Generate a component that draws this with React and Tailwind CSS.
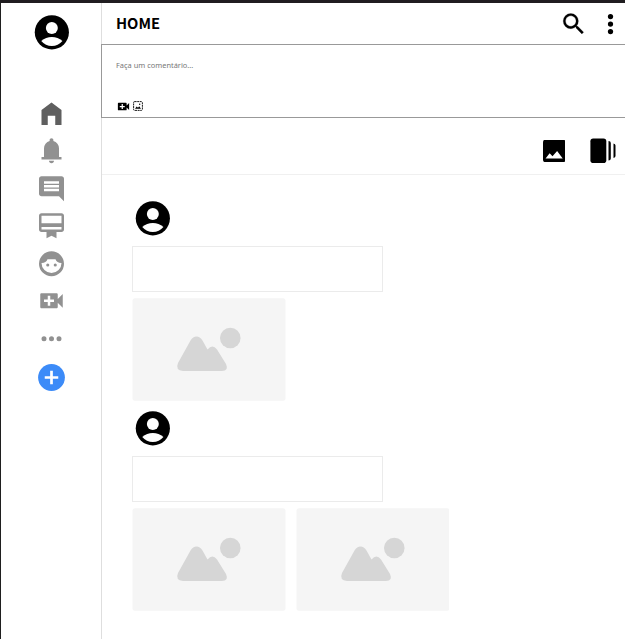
const Icon = ({ className, children, box = '0 0 24 24' }) => (
  <svg viewBox={box} fill="currentColor" className={`block shrink-0 ${className}`} aria-hidden="true">
    {children}
  </svg>
);

const Avatar = () => (
  <Icon className="h-[41px] w-[41px] text-black" box="-0.2 0.1 24 24">
    <circle cx="12" cy="12" r="10" />
    <circle cx="12" cy="9.5" r="3.5" fill="#fff" />
    <path fill="#fff" d="M5.8 17.1Q8.5 14.8 12 14.8T18.2 17.1Q15.700 20 12 20T5.800 17.100Z" />
  </Icon>
);

const videoPath =
  'M17 10.5V7c0-.55-.45-1-1-1H4c-.55 0-1 .45-1 1v10c0 .55.45 1 1 1h12c.55 0 1-.45 1-1v-3.500l4 4v-11l-4 4zM14 13h-3v3H9v-3H6v-2h3V8h2v3h3v2z';

const navIcons = [
  { name: 'home', tone: 'text-[#5f5f5f]', path: 'M4 21V9l8-6 8 6v12h-5v-7.500H9V21z' },
  {
    name: 'notifications',
    tone: 'text-[#919191]',
    path: 'M4 19v-2h2v-7q0-2.075 1.250-3.687T10.500 4.200v-.700q0-.625.438-1.062T12 2t1.063.438T13.500 3.500v.700q2 .500 3.250 2.113T18 10v7h2v2zm8 3q-.825 0-1.412-.587T10 20h4q0 .825-.587 1.413T12 22z',
  },
  {
    name: 'comments',
    tone: 'text-[#919191]',
    path: 'M22 22l-4-4H4q-.825 0-1.412-.587T2 16V4q0-.825.588-1.412T4 2h16q.825 0 1.413.588T22 4zM6 14h12v-2H6zm0-3h12V9H6zm0-3h12V6H6z',
  },
  {
    name: 'membership',
    tone: 'text-[#919191]',
    path: 'M20 2H4c-1.110 0-2 .890-2 2v11c0 1.110.890 2 2 2h4v5l4-2 4 2v-5h4c1.110 0 2-.890 2-2V4c0-1.110-.890-2-2-2zm0 13H4v-2h16v2zm0-5H4V4h16v6z',
  },
  {
    name: 'face',
    tone: 'text-[#919191]',
    path: 'M12 2a10 10 0 1 0 0 20a10 10 0 0 0 0-20zM4 11.300Q7.600 11.400 8.800 8.300H15.200Q16.400 11.400 20 11.300A8 8 0 1 1 4 11.300zM9 11.750a1.250 1.250 0 1 0 0 2.500a1.250 1.250 0 0 0 0-2.500zM15 11.750a1.250 1.250 0 1 0 0 2.500a1.250 1.250 0 0 0 0-2.500z',
  },
  { name: 'video', tone: 'text-[#919191]', path: videoPath },
  {
    name: 'more',
    tone: 'text-[#919191]',
    path: 'M6 10a2 2 0 1 0 0 4a2 2 0 0 0 0-4zM12 10a2 2 0 1 0 0 4a2 2 0 0 0 0-4zM18 10a2 2 0 1 0 0 4a2 2 0 0 0 0-4z',
  },
];

const Placeholder = () => (
  <svg viewBox="0 0 153.5 103" className="block h-[103px] w-[153.500px] shrink-0" aria-hidden="true">
    <rect x=".5" y=".3" width="153" height="102.400" rx="2.500" fill="#f5f5f5" />
    <g fill="#d6d6d6">
      <path d="M46 65 58.500 42.500Q61 38.500 64.500 38.500T70.500 42.500L75.500 51.500Q80.500 45.500 85 51.500L94 66Q97 73 90 73H51Q43 72 46 65Z" />
      <circle cx="98.300" cy="40" r="10.300" />
    </g>
  </svg>
);

const Post = ({ images }) => (
  <article className="h-[210px]">
    <div className="flex h-[48px]">
      <Avatar />
    </div>
    <div className="h-[46px] w-[251px] border border-[#ebebeb] bg-white" />
    <div className="mt-[6px] flex gap-[10px]">
      {Array.from({ length: images }, (_, i) => (
        <Placeholder key={i} />
      ))}
    </div>
  </article>
);

export default function App() {
  return (
    <div className="flex h-[639px] w-[625px] overflow-hidden border-l border-t-[3px] border-l-[#1f1f1f] border-t-[#201d20] bg-white font-['Noto_Sans_CJK_SC','Noto_Sans',sans-serif]">
      <aside className="flex w-[101px] shrink-0 flex-col items-center border-r border-[#dedede] pt-[8.500px]">
        <Avatar />
        <nav className="mt-[46px] flex flex-col gap-[7.500px]">
          {navIcons.map((item) => (
            <Icon key={item.name} box="-0.4 0.2 24 24" className={`h-[30px] w-[30px] ${item.tone}`}>
              <path fillRule="evenodd" d={item.path} />
            </Icon>
          ))}
        </nav>
        <button className="mt-[10px] pl-px text-[#3c8bf8]" aria-label="+">
          <Icon className="h-[27px] w-[27px]">
            <circle cx="12" cy="12" r="11.900" />
            <path d="M12 6v12M6 12h12" stroke="#fff" strokeWidth="2.400" />
          </Icon>
        </button>
      </aside>

      <main className="flex min-w-0 flex-1 flex-col">
        <header className="flex h-[41px] shrink-0 items-center justify-between pl-[14px]">
          <h1 className="pb-[2px] text-[14.700px] font-bold leading-5 text-black">HOME</h1>
          <div className="flex items-center gap-[8px]">
            <Icon className="h-7 w-7" box="-0.6 0 24 24">
              <path d="M15.500 14h-.790l-.280-.270A6.471 6.471 0 0 0 16 9.500 6.500 6.500 0 1 0 9.500 16c1.610 0 3.090-.590 4.230-1.570l.270.280v.790l5 4.990L20.490 19l-4.990-5zm-6 0C7.010 14 5 11.990 5 9.500S7.010 5 9.500 5 14 7.010 14 9.500 11.990 14 9.500 14z" stroke="currentColor" strokeWidth=".2" />
            </Icon>
            <Icon className="h-[30px] w-[30px]" box="-0.4 0 24 24">
              <circle cx="12" cy="6" r="2.100" />
              <circle cx="12" cy="12" r="2.100" />
              <circle cx="12" cy="18" r="2.100" />
            </Icon>
          </div>
        </header>

        <section className="-ml-px flex h-[74px] shrink-0 flex-col border border-r-0 border-[#999]">
          <p className="ml-[14px] mt-[14px] font-['Noto_Sans',sans-serif] text-[7.450px] leading-[12px] text-[#777]">
            Faça um comentário...
          </p>
          <div className="ml-[14px] mt-[27.500px] flex items-center">
            <Icon className="h-[15px] w-[15px]">
              <path fillRule="evenodd" d={videoPath} />
            </Icon>
            <Icon className="ml-[2px] h-[10px] w-[10px]" box="0 0 10 10">
              <rect x=".6" y=".6" width="8.800" height="8.800" rx="1" fill="none" stroke="currentColor" strokeWidth=".9" strokeDasharray="2 .6" />
              <path d="M2 7.700 3.700 5.500 5 6.800 6.200 5.200 8 7.700z" />
              <circle cx="6.700" cy="3.300" r=".7" />
            </Icon>
          </div>
        </section>

        <div className="flex h-[57px] shrink-0 items-start justify-end gap-[25px] border-b border-[#f0f0f0] pr-[9px] pt-[20px]">
          <Icon className="mt-[1.500px] h-[22.500px] w-[22.500px]" box="0 0.3 22 22">
            <rect width="22" height="22" rx="2.500" />
            <path fill="#fff" d="M2.500 18.500 6.500 13.300 9.300 16.300 13.800 11 19.300 18.500z" />
          </Icon>
          <Icon className="h-[26px] w-[26px]" box="0 0 26 26">
            <rect x=".4" y=".5" width="15.900" height="24.500" rx="2.800" />
            <path d="M18.500 3Q20.800 3 20.800 5V20.500Q20.800 22.500 18.500 22.500zM23.500 5.500Q25.500 6 25.500 7.500V18Q25.500 19.500 23.500 20z" />
          </Icon>
        </div>

        <section className="pl-[30px] pt-[23px]">
          <Post images={1} />
          <Post images={2} />
        </section>
      </main>
    </div>
  );
}
